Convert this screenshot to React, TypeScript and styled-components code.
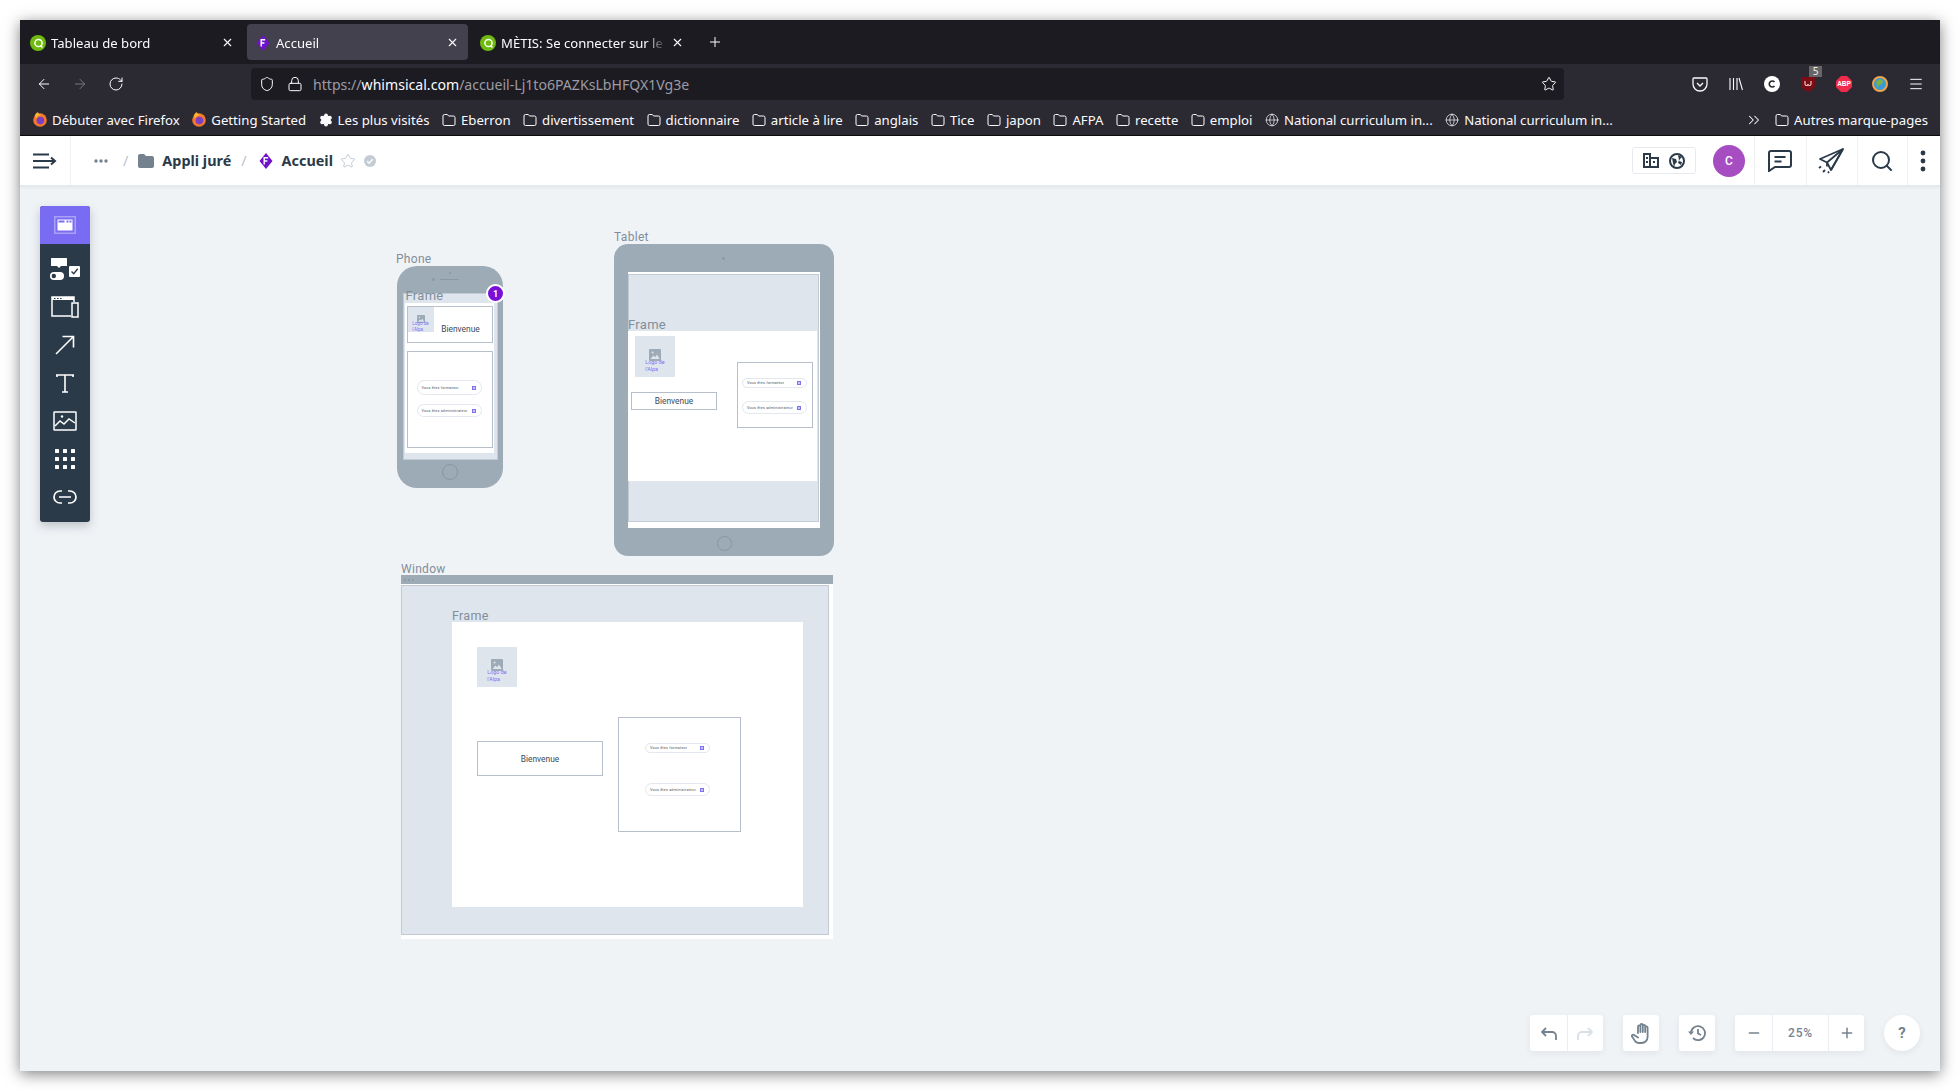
import React from 'react'
import styled, { createGlobalStyle, css } from 'styled-components'
import {
  ArrowLeft,
  ArrowRight,
  ChevronsRight,
  Globe,
  Lock,
  Menu,
  Minus,
  Plus,
  RotateCw,
  Search,
  Settings,
  Shield,
  Star,
  X,
} from 'lucide-react'

const GlobalStyle = createGlobalStyle`
  html, body {
    margin: 0;
    background: #ffffff;
  }
  * {
    box-sizing: border-box;
  }
`

const chromeFont = `"Noto Sans", sans-serif`
const wireFont = `Roboto, "Liberation Sans", sans-serif`

const Page = styled.div`
  width: 1960px;
  height: 1091px;
  padding: 20px;
  overflow: hidden;
`

const BrowserWindow = styled.div`
  width: 1920px;
  height: 1051px;
  display: flex;
  flex-direction: column;
  box-shadow: 0 3px 14px rgba(0, 0, 0, 0.5);
  font-family: ${chromeFont};
`

const TabBar = styled.div`
  height: 44px;
  background: #1c1b22;
  display: flex;
  align-items: center;
  gap: 4px;
  padding-left: 2px;
  flex-shrink: 0;
`

const Tab = styled.div<{ $active?: boolean }>`
  width: 221px;
  height: 36px;
  border-radius: 4px;
  background: ${(p) => (p.$active ? '#42414d' : 'transparent')};
  display: flex;
  align-items: center;
  gap: 5px;
  padding: 1px 9px 0 8px;
  color: #fbfbfe;
  font-size: 13.1px;
`

const TabTitle = styled.span`
  flex: 1;
  white-space: nowrap;
  -webkit-mask-image: linear-gradient(to right, #000 88%, transparent);
  mask-image: linear-gradient(to right, #000 88%, transparent);
`

const NewTab = styled.div`
  width: 36px;
  display: flex;
  justify-content: center;
  color: #fbfbfe;
`

const NavBar = styled.div`
  height: 36px;
  background: #2b2a33;
  display: flex;
  align-items: center;
  padding-top: 4px;
  flex-shrink: 0;
  color: #fbfbfe;
`

const NavButtons = styled.div`
  width: 231px;
  display: flex;
  align-items: center;
  gap: 20px;
  padding-left: 16px;
`

const UrlField = styled.div`
  width: 1313px;
  height: 32px;
  background: #1c1b22;
  border-radius: 4px;
  display: flex;
  align-items: center;
  padding: 0 7px 0 8px;
  font-size: 14.1px;
  color: #9c9ba4;
`

const UrlIcons = styled.div`
  display: flex;
  align-items: center;
  gap: 12px;
  margin-right: 10px;
`

const UrlText = styled.div`
  flex: 1;
  white-space: nowrap;

  b {
    font-weight: 400;
    color: #fbfbfe;
  }
`

const Extensions = styled.div`
  display: flex;
  align-items: center;
  gap: 14px;
  margin-left: 125px;
`

const ExtensionSlot = styled.div`
  position: relative;
  width: 22px;
  height: 22px;
  display: flex;
  align-items: center;
  justify-content: center;
`

const CountBadge = styled.span`
  position: absolute;
  top: -7px;
  right: -3px;
  width: 13px;
  height: 11px;
  background: #666;
  color: #eee;
  font-size: 10px;
  line-height: 11px;
  text-align: center;
`

const BookmarkBar = styled.div`
  height: 36px;
  background: #2b2a33;
  border-bottom: 1px solid #0c0c0d;
  display: flex;
  align-items: center;
  gap: 12.5px;
  padding: 4px 12px 0 13px;
  flex-shrink: 0;
  color: #fbfbfe;
  font-size: 13.2px;
`

const Bookmark = styled.div`
  display: flex;
  align-items: center;
  gap: 5px;
  white-space: nowrap;
`

const BookmarkSpacer = styled.div`
  flex: 1;
`

const OverflowChevron = styled.div`
  display: flex;
`

const AppBar = styled.div`
  height: 50px;
  background: #fff;
  border-bottom: 1px solid #e6eaef;
  box-shadow: 0 1px 3px rgba(40, 55, 70, 0.08);
  display: flex;
  align-items: center;
  flex-shrink: 0;
  position: relative;
  z-index: 2;
  color: #2b3a48;
`

const MenuCell = styled.div`
  width: 51px;
  height: 100%;
  border-right: 1px solid #eef1f4;
  display: flex;
  align-items: center;
  justify-content: center;
`

const Crumbs = styled.div`
  flex: 1;
  display: flex;
  align-items: center;
  padding-left: 22px;
  font-size: 14.4px;
  font-weight: 700;
`

const Slash = styled.span<{ $before: number; $after: number }>`
  color: #b9c2cc;
  font-weight: 400;
  margin: 0 ${(p) => p.$after}px 0 ${(p) => p.$before}px;
`

const CrumbText = styled.span<{ $gap: number }>`
  display: flex;
  margin-left: ${(p) => p.$gap}px;
`

const ShareGroup = styled.div`
  width: 64px;
  height: 27px;
  border: 1px solid #e6eaef;
  border-radius: 3px;
  display: flex;
  align-items: center;
  justify-content: space-around;
  padding: 0 5px;
  margin-right: 17px;
`

const Avatar = styled.div`
  width: 32px;
  height: 32px;
  border-radius: 50%;
  background: #a64dc1;
  color: #fff;
  font-size: 12px;
  font-family: ${wireFont};
  font-weight: 500;
  display: flex;
  align-items: center;
  justify-content: center;
  margin-right: 9px;
`

const BarCell = styled.div<{ $w: number }>`
  width: ${(p) => p.$w}px;
  height: 100%;
  border-left: 1px solid #eef1f4;
  padding-right: 2px;
  display: flex;
  align-items: center;
  justify-content: center;
`

const Canvas = styled.div`
  flex: 1;
  position: relative;
  background: #f0f3f6;
  overflow: hidden;
  font-family: ${wireFont};
`

const ToolPalette = styled.div`
  position: absolute;
  left: 20px;
  top: 20px;
  width: 50px;
  height: 316px;
  background: #2b3a48;
  border-radius: 3px;
  box-shadow: 0 4px 10px rgba(40, 55, 70, 0.25);
  display: flex;
  flex-direction: column;
  align-items: center;
  overflow: hidden;
`

const ToolHeader = styled.div`
  width: 100%;
  height: 38px;
  background: #7a6cf2;
  flex-shrink: 0;
  display: flex;
  align-items: center;
  justify-content: center;
  margin-bottom: 6px;
`

const ToolItem = styled.div`
  height: 38px;
  display: flex;
  align-items: center;
  justify-content: center;
  flex-shrink: 0;
`

type Pos = { $x: number; $y: number; $w?: number; $h?: number }

const placed = css<Pos>`
  position: absolute;
  left: ${(p) => p.$x}px;
  top: ${(p) => p.$y}px;
  ${(p) => p.$w !== undefined && `width: ${p.$w}px;`}
  ${(p) => p.$h !== undefined && `height: ${p.$h}px;`}
`

const DeviceBody = styled.div<Pos & { $radius: number }>`
  ${placed}
  background: #9dabb7;
  border-radius: ${(p) => p.$radius}px;
`

const WindowBody = styled.div<Pos>`
  ${placed}
  background: #fff;
`

const TitleStrip = styled.div<Pos>`
  ${placed}
  background: #9dabb7;
  display: flex;
  align-items: center;
  gap: 2px;
  padding-left: 3px;

  i {
    width: 2px;
    height: 2px;
    border-radius: 50%;
    background: #8896a3;
  }
`

const Caption = styled.div<{ $x: number; $y: number; $size?: number }>`
  position: absolute;
  left: ${(p) => p.$x}px;
  top: ${(p) => p.$y}px;
  color: #808e9b;
  font-size: ${(p) => p.$size ?? 12}px;
  line-height: 1;
  letter-spacing: 0.3px;
  white-space: nowrap;
`

const Backdrop = styled.div<Pos>`
  ${placed}
  background: #dfe5ed;
  border: 1px solid #c2cad3;
`

const Sheet = styled.div<Pos>`
  ${placed}
  background: #fff;
`

const Outline = styled.div<Pos>`
  ${placed}
  background: #fff;
  border: 1px solid #b7c0ca;
  display: flex;
  align-items: center;
  justify-content: center;
`

const Greeting = styled.span<{ $shiftX?: number; $shiftY?: number }>`
  color: #3d4955;
  font-size: 8.4px;
  transform: translate(${(p) => p.$shiftX ?? 0}px, ${(p) => p.$shiftY ?? 0}px);
`

const ImageSlot = styled.div<Pos>`
  ${placed}
  background: #dfe5ed;
  display: flex;
  flex-direction: column;
  align-items: center;
  justify-content: flex-end;
`

const SlotLabel = styled.div<{ $size: number; $bottom: number }>`
  color: #8073f5;
  font-size: ${(p) => p.$size}px;
  line-height: 1.3;
  align-self: center;
  margin-bottom: ${(p) => p.$bottom}px;
  margin-top: -2px;
  white-space: pre;
`

const Pill = styled.div<Pos>`
  ${placed}
  background: #fff;
  border: 1px solid #e3e7ee;
  border-radius: 8px;
  display: flex;
  align-items: center;
  justify-content: space-between;
  padding: 0 5px 0 4px;
  color: #4c5661;
  font-size: 3.7px;
  letter-spacing: 0.2px;
  white-space: nowrap;

  i {
    width: 4px;
    height: 4px;
    background: #c9c3fb;
    border: 1px solid #7e71f4;
    flex-shrink: 0;
  }
`

const DeviceDot = styled.div<Pos>`
  ${placed}
  border-radius: 50%;
  background: #8b99a6;
`

const SpeakerLine = styled.div<Pos>`
  ${placed}
  background: #8b99a6;
`

const HomeButton = styled.div<Pos>`
  ${placed}
  border-radius: 50%;
  border: 1px solid #8896a3;
`

const Marker = styled.div<Pos>`
  ${placed}
  border-radius: 50%;
  background: #7a0fd6;
  border: 2px solid #fff;
  color: #fff;
  font-size: 9px;
  font-weight: 700;
  display: flex;
  align-items: center;
  justify-content: center;
`

const ViewControls = styled.div`
  position: absolute;
  right: 20px;
  bottom: 20px;
  display: flex;
  gap: 20px;
  color: #74828f;
`

const ControlGroup = styled.div`
  height: 36px;
  display: flex;
  background: #fff;
  border-radius: 3px;
  box-shadow: 0 2px 6px rgba(40, 55, 70, 0.08);
`

const ControlCell = styled.div<{ $w?: number }>`
  width: ${(p) => p.$w ?? 36}px;
  display: flex;
  align-items: center;
  justify-content: center;
  font-size: 12px;
  font-weight: 500;
  letter-spacing: 0.8px;

  & + & {
    border-left: 1px solid #eaeef2;
  }
`

const HelpButton = styled.div`
  width: 36px;
  height: 36px;
  border-radius: 50%;
  background: #fff;
  box-shadow: 0 2px 6px rgba(40, 55, 70, 0.08);
  display: flex;
  align-items: center;
  justify-content: center;
  font-size: 15px;
  font-weight: 700;
`

const MetisIcon = () => (
  <svg width="16" height="16" viewBox="0 0 16 16">
    <circle cx="8" cy="8" r="8" fill="#6fba0f" />
    <circle cx="8.5" cy="8" r="3.6" fill="none" stroke="#fff" strokeWidth="1.5" />
    <path d="M10.5 10.5l2 2" stroke="#fff" strokeWidth="1.5" />
  </svg>
)

const DiamondF = ({ size = 16 }: { size?: number }) => (
  <svg width={size} height={size} viewBox="0 0 16 16">
    <path d="M8 0l6.5 8L8 16 1.5 8z" fill="#6f12c9" />
    <path d="M6.2 11.4V4.8h4M6.2 8h3.2" fill="none" stroke="#fff" strokeWidth="1.4" />
  </svg>
)

const FirefoxIcon = () => (
  <svg width="14" height="15" viewBox="0 0 14 15">
    <circle cx="7" cy="8" r="6.8" fill="#f5782a" />
    <circle cx="7.4" cy="8.6" r="3.8" fill="#7a3fc4" />
    <path d="M2 3c1-2 2-2.5 3-3 0 2 2 2 4 3-3 0-5 1-6 4z" fill="#fbb62e" />
  </svg>
)

const FolderIcon = () => (
  <svg width="14" height="14" viewBox="0 0 14 14" fill="none" stroke="#fbfbfe" strokeWidth="1">
    <path d="M1 3a1.5 1.5 0 0 1 1.5-1.5h2.8L6.6 3h4.9A1.5 1.5 0 0 1 13 4.5V11a1.5 1.5 0 0 1-1.5 1.5h-9A1.5 1.5 0 0 1 1 11z" />
  </svg>
)

const MenuLinesIcon = () => (
  <svg width="24" height="16" viewBox="0 0 24 16" fill="none" stroke="#2b3a48" strokeWidth="2">
    <path d="M0 1.5h16M0 8h22M0 14.5h16M18 4.5L22 8l-4 3.5" />
  </svg>
)

const PaletteHeaderIcon = () => (
  <svg width="22" height="18" viewBox="0 0 22 18">
    <rect x="0.75" y="0.75" width="20.5" height="16.5" fill="none" stroke="#a9a0f8" strokeWidth="1.5" />
    <rect x="3.5" y="3.5" width="15" height="11" fill="#fff" />
    <rect x="4.5" y="4.5" width="6" height="2" fill="#7a6cf2" />
    <rect x="12.5" y="4.5" width="2" height="2" fill="#7a6cf2" />
    <rect x="15.5" y="4.5" width="2" height="2" fill="#7a6cf2" />
  </svg>
)

const ComponentsIcon = () => (
  <svg width="30" height="23" viewBox="0 0 30 23">
    <rect x="1" y="0" width="16" height="8" rx="0.5" fill="#fff" />
    <path d="M7 8h4l-2 2z" fill="#fff" />
    <rect x="0" y="14" width="14" height="8" rx="4" fill="#fff" />
    <circle cx="3.8" cy="18" r="2.2" fill="#2b3a48" />
    <rect x="19" y="8" width="11" height="11" rx="1" fill="#fff" />
    <path d="M21.5 13.5l2.2 2.2 4-5" fill="none" stroke="#2b3a48" strokeWidth="1.4" />
  </svg>
)

const DevicesIcon = () => (
  <svg width="28" height="22" viewBox="0 0 28 22" fill="none" stroke="#fff" strokeWidth="1.5">
    <path d="M20 20H1V1h22v5" />
    <rect x="1" y="1" width="22" height="3" fill="#fff" stroke="none" />
    <path d="M3 2.5h1.6M6 2.5h1.6M9 2.5h1.6" stroke="#2b3a48" strokeWidth="1" />
    <rect x="21" y="7" width="6" height="14" fill="#2b3a48" />
  </svg>
)

const ArrowToolIcon = () => (
  <svg width="20" height="20" viewBox="0 0 20 20" fill="none" stroke="#fff" strokeWidth="1.6">
    <path d="M1 19L18.5 1.5M7.5 1.5h11v11" />
  </svg>
)

const TextToolIcon = () => (
  <svg width="18" height="19" viewBox="0 0 18 19" fill="none" stroke="#fff" strokeWidth="1.6">
    <path d="M0 1h18M1 1v2M17 1v2M9 1v17M6 18h6" />
  </svg>
)

const ImageToolIcon = () => (
  <svg width="24" height="20" viewBox="0 0 24 20" fill="none" stroke="#fff" strokeWidth="1.5">
    <rect x="1" y="1" width="22" height="18" rx="0.5" />
    <path d="M2 15l5-5 4 3 5-5 6 4" />
    <circle cx="9" cy="5.5" r="1.2" fill="#fff" stroke="none" />
  </svg>
)

const GridToolIcon = () => (
  <svg width="20" height="20" viewBox="0 0 20 20" fill="#fff">
    {[0, 8, 16].map((y) =>
      [0, 8, 16].map((x) => <rect key={`${x}-${y}`} x={x} y={y} width="4" height="4" rx="0.5" />),
    )}
  </svg>
)

const LinkToolIcon = () => (
  <svg width="24" height="14" viewBox="0 0 24 14" fill="none" stroke="#fff" strokeWidth="1.7">
    <path d="M9 1H7a6 6 0 0 0 0 12h2M15 1h2a6 6 0 0 1 0 12h-2M6 7h12" />
  </svg>
)

const SlotPicture = ({ size }: { size: number }) => (
  <svg width={size} height={size} viewBox="0 0 12 12">
    <rect width="12" height="12" rx="1" fill="#9dabb7" />
    <circle cx="3.6" cy="3.6" r="1" fill="#dfe5ed" />
    <path d="M1.5 10l3-3.4 1.7 1.6L8 5.5l2.7 4.5z" fill="#dfe5ed" />
  </svg>
)

const BuildingIcon = () => (
  <svg width="16" height="15" viewBox="0 0 16 15" fill="none" stroke="#2b3a48" strokeWidth="2">
    <path d="M1 14V1h6v13zM7 5h8v9H7z" />
    <path d="M3 4h2v2H3zM3 8h2v2H3zM10 8h2v2h-2z" fill="#2b3a48" stroke="none" />
  </svg>
)

const WorldIcon = () => (
  <svg width="16" height="16" viewBox="0 0 16 16">
    <circle cx="8" cy="8" r="7" fill="none" stroke="#2b3a48" strokeWidth="2" />
    <path d="M3 5l4 1 1 3-2 2-1 3-1-4zM9 2l4 2-2 2-1 2 3 1-1 3-3-2 1-3z" fill="#2b3a48" />
  </svg>
)

const CommentIcon = () => (
  <svg width="24" height="22" viewBox="0 0 24 22" fill="none" stroke="#2b3a48" strokeWidth="2">
    <path d="M3 1h18a2 2 0 0 1 2 2v12a2 2 0 0 1-2 2H7l-6 4V3a2 2 0 0 1 2-2z" />
    <path d="M6.5 7h11M6.5 11.5h7" />
  </svg>
)

const PlaneIcon = () => (
  <svg width="26" height="26" viewBox="0 0 26 26" fill="none" stroke="#2b3a48" strokeWidth="1.8">
    <path d="M25 1L2 11l7 3.5L13 22z" strokeLinejoin="round" />
    <path d="M25 1L9 14.5v4M25 1L13 22" />
    <path d="M1 20l2-1.5M5 24l2-2M10 25l1-1.5" />
  </svg>
)

const HandIcon = () => (
  <svg width="20" height="21" viewBox="0 0 20 21" fill="none" stroke="currentColor" strokeWidth="1.8" strokeLinecap="round">
    <path d="M7 10V3.5a1.2 1.2 0 0 1 2.4 0V9M9.4 9V2.2a1.2 1.2 0 0 1 2.4 0V9M11.8 9V3a1.2 1.2 0 0 1 2.4 0v6M14.2 9V4.5a1.2 1.2 0 0 1 2.4 0V14a6 6 0 0 1-6 6H8a5 5 0 0 1-3.6-1.5L1 13.5c-.7-1 .9-2.5 2-1.5L7 14.5" />
  </svg>
)

const HistoryIcon = () => (
  <svg width="18" height="16" viewBox="0 0 18 16" fill="none" stroke="currentColor" strokeWidth="1.8">
    <path d="M3 8a7 7 0 1 1 2 5" />
    <path d="M10 4v4.5l3 1.5" />
    <path d="M0 6.5h6L3 10z" fill="currentColor" stroke="none" />
  </svg>
)

const UndoIcon = ({ flip, color }: { flip?: boolean; color: string }) => (
  <svg width="17" height="13" viewBox="0 0 17 13" fill="none" stroke={color} strokeWidth="1.8" style={flip ? { transform: 'scaleX(-1)' } : undefined}>
    <path d="M16 13V9a4 4 0 0 0-4-4H2M6 1L2 5l4 4" />
  </svg>
)

const bookmarks = [
  'Eberron',
  'divertissement',
  'dictionnaire',
  'article à lire',
  'anglais',
  'Tice',
  'japon',
  'AFPA',
  'recette',
  'emploi',
]

const Browser = () => (
  <>
    <TabBar>
      <Tab>
        <MetisIcon />
        <TabTitle>Tableau de bord</TabTitle>
        <X size={13} />
      </Tab>
      <Tab $active>
        <DiamondF />
        <TabTitle>Accueil</TabTitle>
        <X size={13} />
      </Tab>
      <Tab>
        <MetisIcon />
        <TabTitle>MÈTIS: Se connecter sur le</TabTitle>
        <X size={13} />
      </Tab>
      <NewTab>
        <Plus size={16} strokeWidth={1.5} />
      </NewTab>
    </TabBar>
    <NavBar>
      <NavButtons>
        <ArrowLeft size={16} strokeWidth={1.5} />
        <ArrowRight size={16} strokeWidth={1.5} color="#77767f" />
        <RotateCw size={16} strokeWidth={1.5} />
      </NavButtons>
      <UrlField>
        <UrlIcons>
          <Shield size={16} strokeWidth={1.5} color="#fbfbfe" />
          <Lock size={16} strokeWidth={1.5} color="#fbfbfe" />
        </UrlIcons>
        <UrlText>
          https://<b>whimsical.com</b>/accueil-Lj1to6PAZKsLbHFQX1Vg3e
        </UrlText>
        <Star size={16} strokeWidth={1.5} color="#fbfbfe" />
      </UrlField>
      <Extensions>
        <ExtensionSlot>
          <svg width="16" height="15" viewBox="0 0 16 15" fill="none" stroke="#fbfbfe" strokeWidth="1.3">
            <path d="M2 1h12a1 1 0 0 1 1 1v5a7 7 0 0 1-14 0V2a1 1 0 0 1 1-1zM5 6l3 3 3-3" />
          </svg>
        </ExtensionSlot>
        <ExtensionSlot>
          <svg width="14" height="14" viewBox="0 0 14 14" fill="none" stroke="#fbfbfe" strokeWidth="1.1">
            <path d="M1 1v12M4.5 1v12M8 1v12M10 1l3.5 12" />
          </svg>
        </ExtensionSlot>
        <ExtensionSlot>
          <svg width="16" height="16" viewBox="0 0 16 16">
            <circle cx="8" cy="8" r="8" fill="#fff" />
            <path d="M10.5 6a3 3 0 1 0 0 4" fill="none" stroke="#2b2a33" strokeWidth="1.6" />
          </svg>
        </ExtensionSlot>
        <ExtensionSlot>
          <svg width="14" height="16" viewBox="0 0 14 16">
            <path d="M0 1h14v8c0 3-3 5-7 7-4-2-7-4-7-7z" fill="#7a0c14" />
            <path d="M4 5v3a1.5 1.5 0 0 0 3 0 1.5 1.5 0 0 0 3 0V5" fill="none" stroke="#e9c9c9" strokeWidth="1.2" />
          </svg>
          <CountBadge>5</CountBadge>
        </ExtensionSlot>
        <ExtensionSlot>
          <svg width="16" height="16" viewBox="0 0 16 16">
            <path d="M5 0h6l5 5v6l-5 5H5l-5-5V5z" fill="#ef2a4b" />
            <text x="8" y="10.4" textAnchor="middle" fontSize="6.5" fontWeight="700" fill="#fff" fontFamily="Liberation Sans">ABP</text>
          </svg>
        </ExtensionSlot>
        <ExtensionSlot>
          <svg width="16" height="16" viewBox="0 0 16 16">
            <circle cx="8" cy="8" r="7" fill="#3a9ad9" stroke="#f0a44a" strokeWidth="2" />
            <path d="M4 6l4-3 3 2-1 3-3 1-1 3-1-2z" fill="#7cb342" />
          </svg>
        </ExtensionSlot>
        <ExtensionSlot>
          <Menu size={16} strokeWidth={1.5} />
        </ExtensionSlot>
      </Extensions>
    </NavBar>
    <BookmarkBar>
      <Bookmark>
        <FirefoxIcon />
        Débuter avec Firefox
      </Bookmark>
      <Bookmark>
        <FirefoxIcon />
        Getting Started
      </Bookmark>
      <Bookmark>
        <Settings size={14} fill="#fbfbfe" color="#fbfbfe" />
        Les plus visités
      </Bookmark>
      {bookmarks.map((name) => (
        <Bookmark key={name}>
          <FolderIcon />
          {name}
        </Bookmark>
      ))}
      <Bookmark>
        <Globe size={14} strokeWidth={1.2} />
        National curriculum in...
      </Bookmark>
      <Bookmark>
        <Globe size={14} strokeWidth={1.2} />
        National curriculum in...
      </Bookmark>
      <BookmarkSpacer />
      <OverflowChevron>
        <ChevronsRight size={18} strokeWidth={1.4} />
      </OverflowChevron>
      <Bookmark>
        <FolderIcon />
        Autres marque-pages
      </Bookmark>
    </BookmarkBar>
  </>
)

const Header = () => (
  <AppBar>
    <MenuCell>
      <MenuLinesIcon />
    </MenuCell>
    <Crumbs>
      <svg width="16" height="6" viewBox="0 0 16 6" fill="#74828f">
        <circle cx="3" cy="3" r="1.7" />
        <circle cx="8" cy="3" r="1.7" />
        <circle cx="13" cy="3" r="1.7" />
      </svg>
      <Slash $before={14} $after={10}>/</Slash>
      <svg width="16" height="14" viewBox="0 0 16 14" fill="#74828f">
        <path d="M0 2a2 2 0 0 1 2-2h4l2 2h6a2 2 0 0 1 2 2v8a2 2 0 0 1-2 2H2a2 2 0 0 1-2-2z" />
      </svg>
      <CrumbText $gap={8}>Appli juré</CrumbText>
      <Slash $before={10} $after={11}>/</Slash>
      <DiamondF />
      <CrumbText $gap={8}>Accueil</CrumbText>
      <CrumbText $gap={7}>
        <Star size={16} strokeWidth={1.5} color="#c3ccd5" />
      </CrumbText>
      <CrumbText $gap={8}>
        <svg width="12" height="12" viewBox="0 0 12 12">
          <circle cx="6" cy="6" r="6" fill="#c3ccd5" />
          <path d="M3.2 6.2l2 2 3.4-4" fill="none" stroke="#fff" strokeWidth="1.4" />
        </svg>
      </CrumbText>
    </Crumbs>
    <ShareGroup>
      <BuildingIcon />
      <WorldIcon />
    </ShareGroup>
    <Avatar>C</Avatar>
    <BarCell $w={52}>
      <CommentIcon />
    </BarCell>
    <BarCell $w={51}>
      <PlaneIcon />
    </BarCell>
    <BarCell $w={50}>
      <Search size={24} strokeWidth={2} />
    </BarCell>
    <BarCell $w={33}>
      <svg width="6" height="22" viewBox="0 0 6 22" fill="#2b3a48">
        <circle cx="3" cy="3" r="2.4" />
        <circle cx="3" cy="11" r="2.4" />
        <circle cx="3" cy="19" r="2.4" />
      </svg>
    </BarCell>
  </AppBar>
)

const Palette = () => (
  <ToolPalette>
    <ToolHeader>
      <PaletteHeaderIcon />
    </ToolHeader>
    <ToolItem>
      <ComponentsIcon />
    </ToolItem>
    <ToolItem>
      <DevicesIcon />
    </ToolItem>
    <ToolItem>
      <ArrowToolIcon />
    </ToolItem>
    <ToolItem>
      <TextToolIcon />
    </ToolItem>
    <ToolItem>
      <ImageToolIcon />
    </ToolItem>
    <ToolItem>
      <GridToolIcon />
    </ToolItem>
    <ToolItem>
      <LinkToolIcon />
    </ToolItem>
  </ToolPalette>
)

const Phone = () => (
  <DeviceBody $x={376.5} $y={80} $w={106} $h={222} $radius={20}>
    <Caption $x={-0.5} $y={-13}>Phone</Caption>
    <DeviceDot $x={35} $y={12} $w={3} $h={3} />
    <SpeakerLine $x={43} $y={13} $w={19} $h={1} />
    <DeviceDot $x={52} $y={6} $w={2} $h={2} />
    <Backdrop $x={6} $y={27} $w={95} $h={167} />
    <Sheet $x={8} $y={37} $w={89} $h={150} />
    <Caption $x={9} $y={23} $size={13}>Frame</Caption>
    <Outline $x={10} $y={40} $w={86} $h={37}>
      <Greeting $shiftX={11} $shiftY={4}>Bienvenue</Greeting>
    </Outline>
    <ImageSlot $x={11} $y={41} $w={26} $h={25}>
      <SlotPicture size={8} />
      <SlotLabel $size={4.6} $bottom={-1}>{'Logo de\nl\'Alpa'}</SlotLabel>
    </ImageSlot>
    <Outline $x={10} $y={85} $w={86} $h={97} />
    <Pill $x={20} $y={114} $w={65} $h={15}>
      Vous êtes formateur
      <i />
    </Pill>
    <Pill $x={20} $y={138} $w={65} $h={13}>
      Vous êtes administrateur
      <i />
    </Pill>
    <HomeButton $x={45} $y={198} $w={16} $h={16} />
    <Marker $x={89.5} $y={18} $w={19} $h={19}>1</Marker>
  </DeviceBody>
)

const Tablet = () => (
  <DeviceBody $x={594} $y={58} $w={220} $h={312} $radius={14}>
    <Caption $x={0} $y={-13}>Tablet</Caption>
    <DeviceDot $x={108} $y={13} $w={3} $h={3} />
    <Sheet $x={14} $y={28} $w={192} $h={256} />
    <Backdrop $x={14} $y={30} $w={191} $h={248} />
    <Sheet $x={14} $y={87} $w={189} $h={150} />
    <Caption $x={14} $y={74} $size={13}>Frame</Caption>
    <ImageSlot $x={21} $y={92} $w={40} $h={41}>
      <SlotPicture size={12} />
      <SlotLabel $size={5.4} $bottom={4}>{'Logo de\nl\'Alpa'}</SlotLabel>
    </ImageSlot>
    <Outline $x={17} $y={148} $w={86} $h={18}>
      <Greeting>Bienvenue</Greeting>
    </Outline>
    <Outline $x={123} $y={118} $w={76} $h={66} />
    <Pill $x={128} $y={134} $w={65} $h={10}>
      Vous êtes formateur
      <i />
    </Pill>
    <Pill $x={128} $y={157} $w={65} $h={13}>
      Vous êtes administrateur
      <i />
    </Pill>
    <HomeButton $x={103} $y={292} $w={15} $h={15} />
  </DeviceBody>
)

const DesktopFrame = () => (
  <WindowBody $x={381} $y={398} $w={432} $h={355}>
    <Caption $x={0} $y={-21}>Window</Caption>
    <TitleStrip $x={0} $y={-9} $w={432} $h={9}>
      <i />
      <i />
      <i />
    </TitleStrip>
    <Backdrop $x={0} $y={1} $w={428} $h={350} />
    <Sheet $x={51} $y={38} $w={351} $h={285} />
    <Caption $x={51} $y={26} $size={12.5}>Frame</Caption>
    <ImageSlot $x={76} $y={63} $w={40} $h={40}>
      <SlotPicture size={12} />
      <SlotLabel $size={5.4} $bottom={4}>{'Logo de\nl\'Alpa'}</SlotLabel>
    </ImageSlot>
    <Outline $x={76} $y={157} $w={126} $h={35}>
      <Greeting>Bienvenue</Greeting>
    </Outline>
    <Outline $x={217} $y={133} $w={123} $h={115} />
    <Pill $x={244} $y={159} $w={65} $h={10}>
      Vous êtes formateur
      <i />
    </Pill>
    <Pill $x={244} $y={199} $w={65} $h={13}>
      Vous êtes administrateur
      <i />
    </Pill>
  </WindowBody>
)

const Controls = () => (
  <ViewControls>
    <ControlGroup>
      <ControlCell $w={37}>
        <UndoIcon color="#74828f" />
      </ControlCell>
      <ControlCell>
        <UndoIcon flip color="#d9dfe5" />
      </ControlCell>
    </ControlGroup>
    <ControlGroup>
      <ControlCell>
        <HandIcon />
      </ControlCell>
    </ControlGroup>
    <ControlGroup>
      <ControlCell>
        <HistoryIcon />
      </ControlCell>
    </ControlGroup>
    <ControlGroup>
      <ControlCell $w={37}>
        <Minus size={16} strokeWidth={2.2} />
      </ControlCell>
      <ControlCell $w={56}>25%</ControlCell>
      <ControlCell>
        <Plus size={16} strokeWidth={2.2} />
      </ControlCell>
    </ControlGroup>
    <HelpButton>?</HelpButton>
  </ViewControls>
)

export default function App() {
  return (
    <Page>
      <GlobalStyle />
      <BrowserWindow>
        <Browser />
        <Header />
        <Canvas>
          <Phone />
          <Tablet />
          <DesktopFrame />
          <Palette />
          <Controls />
        </Canvas>
      </BrowserWindow>
    </Page>
  )
}
